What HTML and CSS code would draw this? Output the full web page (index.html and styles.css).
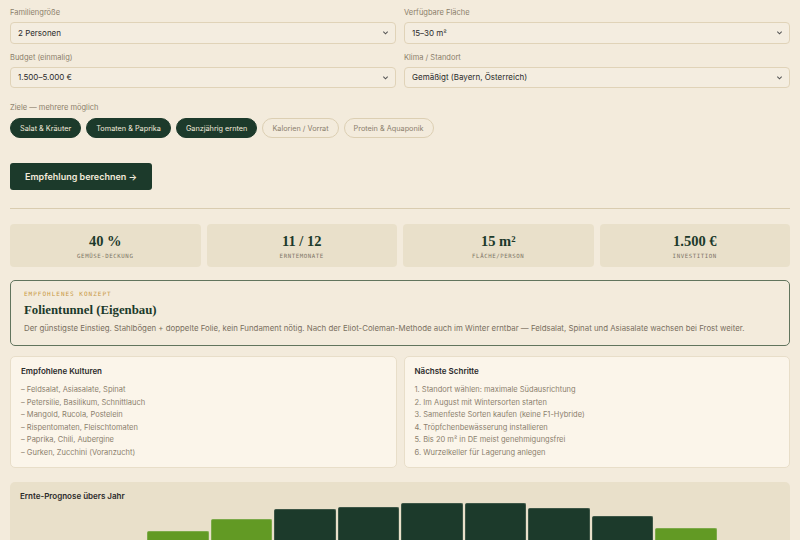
FILE: index.html
```html
<!DOCTYPE html>
<html lang="de">
<head>
  <meta charset="UTF-8">
  <meta name="viewport" content="width=device-width, initial-scale=1.0">
  <title>Gewächshaus-Planer</title>
  <link rel="stylesheet" href="styles.css">
</head>
<body>
  <div class="container">
    <!-- Eingaben -->
    <section class="form-grid">
      <div class="field">
        <label>Familiengröße</label>
        <div class="select"><span>2 Personen</span><svg class="chev" viewBox="0 0 8 8"><path d="M1.5 3 L4 5.5 L6.5 3"/></svg></div>
      </div>
      <div class="field">
        <label>Verfügbare Fläche</label>
        <div class="select"><span>15–30 m²</span><svg class="chev" viewBox="0 0 8 8"><path d="M1.5 3 L4 5.5 L6.5 3"/></svg></div>
      </div>
      <div class="field">
        <label>Budget (einmalig)</label>
        <div class="select"><span>1.500–5.000 €</span><svg class="chev" viewBox="0 0 8 8"><path d="M1.5 3 L4 5.5 L6.5 3"/></svg></div>
      </div>
      <div class="field">
        <label>Klima / Standort</label>
        <div class="select"><span>Gemäßigt (Bayern, Österreich)</span><svg class="chev" viewBox="0 0 8 8"><path d="M1.5 3 L4 5.5 L6.5 3"/></svg></div>
      </div>
    </section>

    <section class="goals">
      <label>Ziele — mehrere möglich</label>
      <div class="chips">
        <span class="chip active">Salat &amp; Kräuter</span>
        <span class="chip active">Tomaten &amp; Paprika</span>
        <span class="chip active">Ganzjährig ernten</span>
        <span class="chip">Kalorien / Vorrat</span>
        <span class="chip">Protein &amp; Aquaponik</span>
      </div>
    </section>

    <button class="calc-btn">Empfehlung berechnen →</button>

    <hr class="divider">

    <!-- Kennzahlen -->
    <section class="stats">
      <div class="stat"><div class="stat-value">40 %</div><div class="stat-label">Gemüse-Deckung</div></div>
      <div class="stat"><div class="stat-value">11 / 12</div><div class="stat-label">Erntemonate</div></div>
      <div class="stat"><div class="stat-value">15 m²</div><div class="stat-label">Fläche/Person</div></div>
      <div class="stat"><div class="stat-value">1.500 €</div><div class="stat-label">Investition</div></div>
    </section>

    <section class="concept">
      <div class="kicker">Empfohlenes Konzept</div>
      <h2>Folientunnel (Eigenbau)</h2>
      <p>Der günstigste Einstieg. Stahlbögen + doppelte Folie, kein Fundament nötig. Nach der Eliot-Coleman-Methode auch im Winter erntbar — Feldsalat, Spinat und Asiasalate wachsen bei Frost weiter.</p>
    </section>

    <section class="cards">
      <div class="card">
        <h3>Empfohlene Kulturen</h3>
        <ul>
          <li>– Feldsalat, Asiasalate, Spinat</li>
          <li>– Petersilie, Basilikum, Schnittlauch</li>
          <li>– Mangold, Rucola, Postelein</li>
          <li>– Rispentomaten, Fleischtomaten</li>
          <li>– Paprika, Chili, Aubergine</li>
          <li>– Gurken, Zucchini (Voranzucht)</li>
        </ul>
      </div>
      <div class="card">
        <h3>Nächste Schritte</h3>
        <ul>
          <li>1. Standort wählen: maximale Südausrichtung</li>
          <li>2. Im August mit Wintersorten starten</li>
          <li>3. Samenfeste Sorten kaufen (keine F1-Hybride)</li>
          <li>4. Tröpfchenbewässerung installieren</li>
          <li>5. Bis 20 m² in DE meist genehmigungsfrei</li>
          <li>6. Wurzelkeller für Lagerung anlegen</li>
        </ul>
      </div>
    </section>

    <section class="chart">
      <h3>Ernte-Prognose übers Jahr</h3>
      <div class="bars">
        <div class="bar" style="height: 0%"></div>
        <div class="bar" style="height: 0%"></div>
        <div class="bar light" style="height: 72%"></div>
        <div class="bar light" style="height: 84%"></div>
        <div class="bar" style="height: 94%"></div>
        <div class="bar" style="height: 96%"></div>
        <div class="bar" style="height: 100%"></div>
        <div class="bar" style="height: 100%"></div>
        <div class="bar" style="height: 95%"></div>
        <div class="bar" style="height: 87%"></div>
        <div class="bar light" style="height: 75%"></div>
        <div class="bar" style="height: 0%"></div>
      </div>
    </section>
  </div>
</body>
</html>
```

FILE: styles.css
```css
/* Grundlayout */
body {
  margin: 0;
  font-family: Inter, "Noto Sans", sans-serif;
  background-color: #f3ebdc;
  color: #2b2b2b;
}
.container {
  padding: 8px 10px 0;
}

/* Formular */
.form-grid {
  display: grid;
  grid-template-columns: 1fr 1fr;
  column-gap: 8px;
  row-gap: 9px;
}
.field label,
.goals label {
  display: block;
  font-size: 7.5px;
  line-height: 10px;
  color: #8b7e6a;
  margin-bottom: 4px;
}
.select {
  display: flex;
  justify-content: space-between;
  align-items: center;
  height: 19.5px;
  padding: 0 6px 0 7px;
  border: 1px solid #e0d3b8;
  border-radius: 4px;
  background-color: #f4ede0;
  font-size: 8px;
  color: #2b2b2b;
}
.chev {
  width: 7px;
  height: 7px;
  fill: none;
  stroke: #555;
  stroke-width: 1.2;
}

/* Ziele */
.goals {
  margin-top: 15px;
}
.goals label {
  margin-bottom: 5px;
}
.chips {
  display: flex;
  gap: 5px;
}
.chip {
  display: inline-flex;
  align-items: center;
  height: 18px;
  padding: 0 9px;
  border: 1px solid #dccfb3;
  border-radius: 10px;
  font-size: 7.3px;
  color: #8b7f6d;
}
.chip.active {
  background-color: #1c3a2b;
  border-color: #1c3a2b;
  color: #f3ebdc;
}

.calc-btn {
  display: block;
  margin-top: 25px;
  height: 27px;
  padding: 0 15px;
  border: none;
  border-radius: 3px;
  background-color: #1c3a2b;
  color: #f3ebdc;
  font-family: inherit;
  font-size: 9px;
  font-weight: 600;
  cursor: pointer;
}

.divider {
  margin: 18px 0 0;
  border: none;
  border-top: 1px solid #d9ccb0;
}

/* Kennzahlen */
.stats {
  display: grid;
  grid-template-columns: repeat(4, 1fr);
  gap: 6px;
  margin-top: 15px;
}
.stat {
  padding: 8px 8px 7px;
  background-color: #e9e0ca;
  border-radius: 4px;
  text-align: center;
}
.stat-value {
  font-family: "Liberation Serif", serif;
  font-weight: bold;
  font-size: 14.5px;
  line-height: 18px;
  color: #1c3a2b;
}
.stat-label {
  margin-top: 2px;
  font-family: "DejaVu Sans Mono", monospace;
  font-size: 5.7px;
  line-height: 8px;
  letter-spacing: 0.6px;
  text-transform: uppercase;
  color: #7d7566;
}

/* Konzept */
.concept {
  margin-top: 13px;
  padding: 9px 13px 11px;
  border: 1px solid #61745d;
  border-radius: 5px;
}
.kicker {
  font-family: "DejaVu Sans Mono", monospace;
  font-size: 6px;
  line-height: 8px;
  letter-spacing: 1px;
  text-transform: uppercase;
  color: #c99a45;
}
.concept h2 {
  margin: 4px 0 0;
  font-family: "Liberation Serif", serif;
  font-size: 12.8px;
  line-height: 16px;
  color: #1c3a2b;
}
.concept p {
  margin: 4px 0 0;
  font-size: 7.85px;
  line-height: 12px;
  color: #7a6f5f;
}

/* Karten */
.cards {
  display: grid;
  grid-template-columns: 1fr 1fr;
  gap: 7px;
  margin-top: 10px;
}
.card {
  padding: 8px 10px 7px;
  background-color: #fbf5ea;
  border: 1px solid #e8dec9;
  border-radius: 5px;
}
.card h3,
.chart h3 {
  margin: 0;
  font-size: 8px;
  line-height: 12px;
  font-weight: 600;
  color: #2b2b2b;
}
.card ul {
  list-style: none;
  margin: 7px 0 0;
  padding: 0;
}
.card li {
  font-size: 7.5px;
  line-height: 12.6px;
  color: #8b7f6d;
}

/* Diagramm */
.chart {
  margin-top: 14px;
  padding: 8px 10px 10px;
  background-color: #e9e0ca;
  border-radius: 5px;
}
.bars {
  display: flex;
  align-items: flex-end;
  gap: 2px;
  height: 100px;
  margin-top: 2px;
}
.bar {
  flex: 1;
  background-color: #1c3a2b;
  border: 1px solid #3d5646;
  border-bottom: none;
  border-radius: 2px 2px 0 0;
}
.bar.light {
  background-color: #629a24;
  border-color: #7daa4a;
}
```
